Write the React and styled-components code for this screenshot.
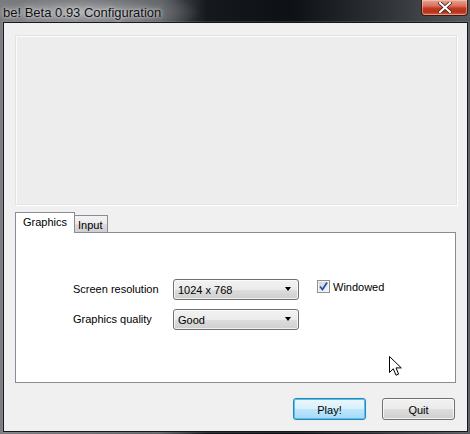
import React, { Component } from 'react';
import styled, { createGlobalStyle } from 'styled-components';

const Global = createGlobalStyle`
    html, body {
        margin:0;
        padding:0;
        background:#2a2d31;
    }
    body {
        font-family:"Liberation Sans", Arial, sans-serif;
        font-size:11px;
        color:#000;
    }
`;

class App extends Component {
    state = {
        tab : 'graphics',
        windowed : true
    }

    toggleWindowed = () => {
        this.setState({windowed: !this.state.windowed});
    }

    render() {
        return (
            <Window>
                <Global />
                <TitleBar>
                    <Title>be! Beta 0.93 Configuration</Title>
                    <CloseBtn>
                        <svg width="14" height="11" viewBox="0 0 14 11">
                            <path d="M2 1 L12 10 M12 1 L2 10" stroke="#3a1010" strokeWidth="3.6" strokeLinecap="square" />
                            <path d="M2 1 L12 10 M12 1 L2 10" stroke="#fff" strokeWidth="2.2" strokeLinecap="square" />
                        </svg>
                    </CloseBtn>
                </TitleBar>

                <Client>
                    <Banner />

                    <Tabs>
                        <TabStrip>
                            <Tab active={this.state.tab === 'graphics'} onClick={()=>{this.setState({tab:'graphics'})}}>Graphics</Tab>
                            <Tab active={this.state.tab === 'input'} onClick={()=>{this.setState({tab:'input'})}}>Input</Tab>
                        </TabStrip>
                        <Panel>
                            {this.state.tab === 'graphics' &&
                                <Form>
                                    <Label>Screen resolution</Label>
                                    <Combo>
                                        <span>1024 x 768</span>
                                        <Arrow />
                                    </Combo>
                                    <CheckRow onClick={this.toggleWindowed}>
                                        <CheckBox>
                                            {this.state.windowed &&
                                                <svg width="11" height="11" viewBox="0 0 11 11">
                                                    <path d="M2 5.5 L4.5 8.5 L9 1.5" fill="none" stroke="#2a4fa8" strokeWidth="1.8" />
                                                </svg>
                                            }
                                        </CheckBox>
                                        Windowed
                                    </CheckRow>

                                    <Label>Graphics quality</Label>
                                    <Combo>
                                        <span>Good</span>
                                        <Arrow />
                                    </Combo>
                                </Form>
                            }
                            <Cursor width="14" height="21" viewBox="0 0 14 21">
                                <path d="M0.5 0.5 L0.5 16.5 L4.3 12.8 L7 19.2 L9.6 18.1 L7 11.9 L12.3 11.9 Z" fill="#fff" stroke="#000" strokeWidth="1" strokeLinejoin="miter" />
                            </Cursor>
                        </Panel>
                    </Tabs>

                    <Buttons>
                        <Button primary>Play!</Button>
                        <Button>Quit</Button>
                    </Buttons>
                </Client>
            </Window>
        )
    }
}


const Window = styled.div`
    width:470px;
    height:434px;
    display:flex;
    flex-direction:column;
    overflow:hidden;
    background:
        radial-gradient(ellipse 120px 22px at 80px 12px, rgba(170,172,175,0.9), rgba(120,122,126,0.5) 70%, rgba(0,0,0,0) 100%),
        linear-gradient(to right, #7a7c80 0, #5c5f63 34%, #15181c 44%, #0d1014 62%, #2b2e33 80%, #55585c 100%);
`;

const TitleBar = styled.div`
    height:22px;
    flex:none;
    display:flex;
    align-items:flex-start;
    justify-content:space-between;
    position:relative;
`;

const Title = styled.div`
    font-family:"Liberation Sans", Arial, sans-serif;
    font-size:13px;
    line-height:20px;
    padding:3px 0 0 3px;
    color:#111;
    text-shadow:0 0 6px rgba(255,255,255,0.8), 0 0 3px rgba(255,255,255,0.6);
`;

const CloseBtn = styled.div`
    width:45px;
    height:15px;
    margin-right:2px;
    display:flex;
    align-items:center;
    justify-content:center;
    border:1px solid #3d1a14;
    border-top:none;
    border-radius:0 0 4px 4px;
    background:linear-gradient(to bottom, #e8a493 0, #d7705a 40%, #c13b22 55%, #b8301a 80%, #d46b4c 100%);
    box-shadow:inset 0 0 0 1px rgba(255,220,200,0.45);
`;

const Client = styled.div`
    flex:1;
    margin:0 2px 2px 3px;
    border:1px solid #151719;
    background:#f0f0f0;
    display:flex;
    flex-direction:column;
    padding:12px 11px 0 11px;
    box-shadow:0 0 0 1px rgba(200,200,200,0.15);
`;

const Banner = styled.div`
    height:168px;
    width:440px;
    background:#ededed;
    border:1px solid #e2e2e2;
    box-shadow:1px 1px 0 #fff, inset 1px 1px 0 #fbfbfb;
`;

const Tabs = styled.div`
    margin-top:7px;
    width:441px;
    display:flex;
    flex-direction:column;
`;

const TabStrip = styled.div`
    display:flex;
    align-items:flex-end;
    height:21px;
    position:relative;
    z-index:1;
    margin-bottom:-1px;
`;

const Tab = styled.div`
    height:${props => props.active ? '21px' : '18px'};
    padding:${props => props.active ? '0 7px' : '0 4px 0 3px'};
    line-height:${props => props.active ? '19px' : '18px'};
    border:1px solid #898c95;
    border-bottom:${props => props.active ? 'none' : '1px solid #898c95'};
    margin-left:${props => props.active ? '0' : '-1px'};
    background:${props => props.active ? '#fff' : 'linear-gradient(to bottom, #f3f3f3 0, #ebebeb 50%, #dddddd 51%, #cfcfcf 100%)'};
    box-sizing:border-box;
    cursor:default;
    &:first-child {
        margin-left:0;
    }
`;

const Panel = styled.div`
    height:151px;
    background:#fff;
    border:1px solid #898c95;
    box-sizing:border-box;
    position:relative;
    padding:45px 0 0 57px;
`;

const Form = styled.div`
    display:grid;
    grid-template-columns:100px 126px auto;
    grid-row-gap:8px;
    align-items:center;
`;

const Label = styled.div`
    line-height:21px;
    padding-top:1px;
`;

const Combo = styled.div`
    height:21px;
    box-sizing:border-box;
    border:1px solid #707070;
    border-radius:3px;
    background:linear-gradient(to bottom, #f2f2f2 0, #ebebeb 50%, #dddddd 51%, #cfcfcf 100%);
    box-shadow:inset 0 0 0 1px rgba(255,255,255,0.7);
    display:flex;
    align-items:center;
    justify-content:space-between;
    padding:0 7px 0 4px;
    span {
        padding-top:1px;
    }
`;

const Arrow = styled.div`
    width:0;
    height:0;
    border-left:3.5px solid transparent;
    border-right:3.5px solid transparent;
    border-top:4px solid #000;
`;

const CheckRow = styled.div`
    display:flex;
    align-items:center;
    margin-left:18px;
    align-self:start;
    margin-top:2px;
    cursor:default;
`;

const CheckBox = styled.div`
    width:13px;
    height:13px;
    box-sizing:border-box;
    border:1px solid #8e8f8f;
    background:linear-gradient(135deg, #cbcfd5 0, #e8ebee 60%, #f6f6f6 100%);
    box-shadow:inset 0 0 0 1px #f4f4f4;
    margin-right:3px;
    display:flex;
    align-items:center;
    justify-content:center;
`;

const Cursor = styled.svg`
    position:absolute;
    left:373px;
    top:123px;
`;

const Buttons = styled.div`
    display:flex;
    justify-content:flex-end;
    gap:16px;
    margin-top:15px;
    width:440px;
`;

const Button = styled.div`
    width:73px;
    height:22px;
    box-sizing:border-box;
    border:1px solid ${props => props.primary ? '#3c7fb1' : '#707070'};
    border-radius:3px;
    background:${props => props.primary
        ? 'linear-gradient(to bottom, #eaf6fd 0, #d9f0fc 50%, #bee6fd 51%, #a7d9f5 100%)'
        : 'linear-gradient(to bottom, #f2f2f2 0, #ebebeb 50%, #dddddd 51%, #cfcfcf 100%)'};
    box-shadow:${props => props.primary ? 'inset 0 0 0 1px #48c6f3, 0 0 1px #7fd0f5' : 'inset 0 0 0 1px rgba(255,255,255,0.7)'};
    display:flex;
    align-items:center;
    justify-content:center;
    padding-top:1px;
    cursor:default;
`;

export default App;
